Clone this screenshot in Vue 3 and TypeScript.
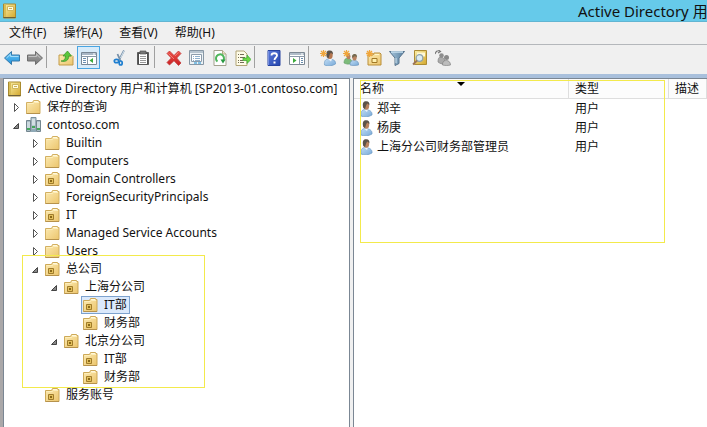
<script setup lang="ts">
import { shallowRef } from 'vue'

interface TreeRow {
  name: string
  level: number
  icon: string
  state?: 'open' | 'closed'
}

interface Tool {
  icon?: string
  label?: string
  kind?: 'separator' | 'space'
  active?: boolean
}

const glyphs: Record<string, string> = {
  console:
    '<path d="M1.500 1h12v14h-12z" fill="url(#gold)" stroke="#a98a2e"/><path d="M2 1.500h2v13H2z" fill="#d9bd55"/><path d="M5.500 3.500h6v4h-6z" fill="#fffbe0" stroke="#d0b65c"/><path d="M7 5.500h3" stroke="#c9b25c"/><path d="M1.500 14.500h12" stroke="#6f6038"/>',
  folder:
    '<path d="M.5 3.500h6l1-2h5l.5 1h1v12H.5z" fill="url(#folder)" stroke="#d3b062"/><path d="M8 2.500h4" stroke="#fff8dc"/><path d="M1.500 4.500h6l1-1h4.500" fill="none" stroke="#fdeebb"/><path d="M.5 14.500H14" stroke="#b6924c"/>',
  unit:
    '<path d="M.5 3.500h6l1-2h5l.5 1h1v12H.5z" fill="url(#folder)" stroke="#cda958"/><path d="M8 2.500h4" stroke="#fff8dc"/><path d="M1.500 4.500h6l1-1h4.500" fill="none" stroke="#fdeebb"/><path d="M3.500 7.500h5v5h-5z" fill="#e4c15e" stroke="#a07c2a"/><path d="M5 9h2v2H5z" fill="#8a6818"/><path d="M.5 14.500H14" stroke="#b6924c"/>',
  domain:
    '<path d="M5 .5h5v12H5z" fill="#b7c7cf" stroke="#7d919b"/><path d="M.5 3.500h4v11h-4zM10.500 3.500h4v11h-4z" fill="#a9bcc5" stroke="#73868f"/><path d="M6 3h3M6 5h3M6 7h3M1 6h3M1 8h3M1 10h3M11 6h3M11 8h3M11 10h3" stroke="#eef6f8"/><path d="M1 11h3v2H1zM11 11h3v2h-3zM6 9h3v2H6z" fill="#45a85b"/><path d="M5 12h5v3H5z" fill="#8fa9b6"/>',
  back:
    '<path d="M.5 8 7.500 1.500V5h8v6h-8v3.500z" fill="url(#blue)" stroke="#3679aa"/><path d="M2.500 8 6.500 4.300V6.500h8" fill="none" stroke="#a4ddfa"/>',
  forward:
    '<path d="M15.500 8 8.500 1.500V5h-8v6h8v3.500z" fill="url(#gray)" stroke="#6e6e6e"/><path d="M1.500 6.500h8V4.300L13.500 8" fill="none" stroke="#c2c2c2"/>',
  up:
    '<path d="M1 5h5l1 1h8v9H1z" fill="url(#folder)" stroke="#c39b48"/><path d="M10 5h4v2" stroke="#fff0b5" fill="none"/><path d="M3 11c3 0 4.500-1.800 4.500-5H5L9.500 1l4 5h-2.700c0 4-3 6.500-7.800 5z" fill="#5cc63b" stroke="#34902a" stroke-width=".7"/>',
  tree:
    '<path d="M.5 2.500h15v12H.5z" fill="#fff" stroke="#798795"/><path d="M1 3h14v2H1z" fill="#a9b7c6"/><path d="M12 4h2" stroke="#fff"/><path d="M.5 6.500h15M6.500 7v7" stroke="#8998a8"/><path d="M2 8.500h3M2 10.500h3M2 12.500h3" stroke="#6b8fb2"/><path d="M12 8v5L8.500 10.500z" fill="#3caa3b"/>',
  cut:
    '<path d="M12 .5 7 10M5.500 4l3 7" stroke="#7790a8" stroke-width="1.800"/><path d="M12 1 8.500 8" stroke="#d7e5ee"/><ellipse cx="4.500" cy="11" rx="2.200" ry="1.700" fill="none" stroke="#1f7fd0" stroke-width="1.700"/><ellipse cx="8.700" cy="13" rx="1.500" ry="2" fill="none" stroke="#1f7fd0" stroke-width="1.700"/>',
  paste:
    '<path d="M2.500 2.500h11v12h-11z" fill="#4d4d4d" stroke="#5c5c5c"/><path d="M4 4h8v10H4z" fill="#fff"/><path d="M5 1h6v3H5z" fill="#777" stroke="#555" stroke-width=".7"/><path d="M5 6.500h6M5 8.500h6M5 10.500h6M5 12.500h6" stroke="#999"/>',
  remove:
    '<path d="M3.500 1 8 5.500 12.500 1 15 3.500 10.700 8 15 13l-2.500 2.500L8 10.700 3.500 15 1 12.500 5.300 8 1 3.500z" fill="url(#red)" stroke="#c23a3a" stroke-width=".8"/><path d="M2.500 3.500 8 9M12.500 2.500 9 6" stroke="#f57b72"/>',
  properties:
    '<path d="M.5.5h14v14H.5z" fill="#edf2f5" stroke="#8797a5"/><path d="M1 1h13v2H1z" fill="#b7c4cf"/><path d="M2.500 4.500h10v7h-10z" fill="#fff" stroke="#8d9cab"/><path d="M4 6.500h1M6 6.500h5M4 8.500h1M6 8.500h5M4 10.500h1M6 10.500h5" stroke="#8fb0cc"/><path d="M5 13h3M9 13h3" stroke="#5eb0de" stroke-width="1.500"/>',
  refresh:
    '<path d="M2 .5h8.500L14 4v11.500H2z" fill="#fff" stroke="#a3a18e"/><path d="M10.500.5V4H14" fill="#eee8c8" stroke="#b1a98a"/><path d="M5.500 11.500A4 4 0 1 1 11 11" fill="none" stroke="#4fb65b" stroke-width="2"/><path d="M8.500 9.500h5L11 13.500z" fill="#299942"/>',
  export:
    '<path d="M1 1h8l3 3v11.500H1z" fill="#fffce8" stroke="#b2a477"/><path d="M3 4.500h1M3 7.500h1M3 10.500h1M3 12.500h1M5 4.500h4M5 7.500h5M5 10.500h3M5 12.500h4" stroke="#746d58"/><path d="M8 8h4V5l4 4.500-4 4v-3H8z" fill="#6dda45" stroke="#39a333" stroke-width=".7"/>',
  help:
    '<path d="M2 .5h12v15H2z" fill="url(#navy)" stroke="#2643a0"/><path d="M2.500 1v14" stroke="#7890df"/><path d="M5.500 5.500c0-3 5.500-3 5.500 0 0 2-2.500 2-2.500 4.500" fill="none" stroke="#fff" stroke-width="1.800"/><path d="M7.500 11.500h2v2h-2z" fill="#fff"/>',
  pane:
    '<path d="M.5 2.500h15v12H.5z" fill="#fff" stroke="#7d8994"/><path d="M1 3h14v2H1z" fill="#b0bdc9"/><path d="M12 4h2" stroke="#fff"/><path d="M.5 6.500h15M10.500 7v7" stroke="#8b9aaa"/><path d="M12 8.500h2M12 10.500h2M12 12.500h2" stroke="#688cac"/><path d="M4 8v5l3.500-2.500z" fill="#3caa3b"/>',
  user:
    '<path d="M1 15c-.5-4 1-6.500 4-6.500 4.500 0 7.500 2 7 5.500-3 2-8 2.500-11 1z" fill="url(#shirt)" stroke="#6f9cc6" stroke-width=".7"/><path d="M4 8.500h4L7 11z" fill="#eef3f7"/><ellipse cx="6.300" cy="4.800" rx="2.900" ry="3.900" fill="#b98260"/><path d="M3.300 7C2 2 3.500.3 6.300.3c2.500 0 3.500 1.700 3 4L7.500 2.500C6 3.500 5.800 6 5 8z" fill="#5d5349"/>',
  newUser:
    '<path d="M4.500 15c-.5-4 1-6 4-6 4.500 0 7.500 1.500 7 5-3 2-8 2.500-11 1z" fill="url(#shirt)" stroke="#6f9cc6" stroke-width=".7"/><path d="M8 9h4l-1 2.500z" fill="#eef3f7"/><ellipse cx="9.800" cy="5" rx="2.900" ry="3.900" fill="#b5764f"/><path d="M6.800 7.200C5.500 2.200 7 .5 9.800.5c2.500 0 3.500 1.700 3 4L11 2.700C9.500 3.700 9.300 6.200 8.500 8.200z" fill="#5d5349"/><path d="M3.500 0v7M0 3.500h7M1 1l5 5M6 1 1 6" stroke="#f0a63c" stroke-width="1.200"/>',
  newGroup:
    '<path d="M1 13c0-4 2-5 4-5s4 2 4 5c-3 1.500-5 1.500-8 0z" fill="#7dbb7a" stroke="#5f9a62" stroke-width=".6"/><ellipse cx="5.500" cy="6.500" rx="2" ry="2.700" fill="#b98260"/><path d="M7 15c0-4 2-4.500 4.500-4.500s4.500 1.500 4 4.500c-3 .7-6 .7-8.500 0z" fill="url(#shirt)" stroke="#6490b8" stroke-width=".6"/><ellipse cx="11.500" cy="7.500" rx="2.200" ry="3" fill="#b98260"/><path d="M9.300 8c-.8-3 .7-4 2.500-4 2 0 2.300 1.500 2 3.500L12 6z" fill="#756a50"/><path d="M3.500 0v7M0 3.500h7M1 1l5 5M6 1 1 6" stroke="#f0a63c" stroke-width="1.200"/>',
  newUnit:
    '<path d="M2 5h5l1-2h6l1 1v11H2z" fill="url(#folder)" stroke="#ba8e38"/><path d="M9 4.500h4" stroke="#fff5c8"/><path d="M6 8.500h5v4H6z" fill="#fff0ae" stroke="#a17826"/><path d="M3.500 0v7M0 3.500h7M1 1l5 5M6 1 1 6" stroke="#f0a63c" stroke-width="1.300"/>',
  filter:
    '<path d="M.5 1.500h15L10 8v5.500l-4 2V8z" fill="url(#steel)" stroke="#58748d"/><path d="M2 2h12" stroke="#c9e0ef" stroke-width="1.500"/><path d="M7 8v5" stroke="#d0e2ed"/>',
  find:
    '<path d="M2.500.5h12v14h-12z" fill="url(#gold)" stroke="#ac8c34"/><path d="M5 2.500h8v4H5z" fill="#fff9d5"/><circle cx="7.500" cy="8" r="3.300" fill="#dcecf2" stroke="#8fa3ae" stroke-width="1.200"/><path d="m5 10.500-4 4" stroke="#9c7357" stroke-width="1.800"/>',
  members:
    '<path d="M3 12c0-4 1-5 3-5s4 2 4 5-5 2-7 0z" fill="#aaa" stroke="#777" stroke-width=".6"/><circle cx="6.500" cy="5.500" r="2.300" fill="#8d8d8d"/><path d="M7.500 15c0-4 2-4.500 4-4.500s4 1.500 4 4.500c-3 .7-5 .7-8 0z" fill="#bdbdbd" stroke="#777" stroke-width=".6"/><circle cx="11.500" cy="7.500" r="2.500" fill="#898989"/><path d="M0 4C1 1 3 0 5 1M3.500 0l2 1.500L3 3" fill="none" stroke="#777" stroke-width="1.200"/>',
}

const menus = ['文件(F)', '操作(A)', '查看(V)', '帮助(H)']

const tools: Tool[] = [
  { icon: 'back', label: '后退' },
  { icon: 'forward', label: '前进' },
  { kind: 'separator' },
  { icon: 'up', label: '上移一级' },
  { icon: 'tree', label: '显示控制台树', active: true },
  { kind: 'space' },
  { icon: 'cut', label: '剪切' },
  { icon: 'paste', label: '粘贴' },
  { kind: 'separator' },
  { icon: 'remove', label: '删除' },
  { icon: 'properties', label: '属性' },
  { icon: 'refresh', label: '刷新' },
  { icon: 'export', label: '导出列表' },
  { kind: 'separator' },
  { icon: 'help', label: '帮助' },
  { icon: 'pane', label: '显示操作窗格' },
  { kind: 'separator' },
  { icon: 'newUser', label: '新建用户' },
  { icon: 'newGroup', label: '新建组' },
  { icon: 'newUnit', label: '新建组织单位' },
  { icon: 'filter', label: '筛选' },
  { icon: 'find', label: '查找' },
  { icon: 'members', label: '添加到组' },
]

const head: TreeRow[] = [
  { name: 'Active Directory 用户和计算机 [SP2013-01.contoso.com]', level: 0, icon: 'console' },
  { name: '保存的查询', level: 1, icon: 'folder', state: 'closed' },
  { name: 'contoso.com', level: 1, icon: 'domain', state: 'open' },
  { name: 'Builtin', level: 2, icon: 'folder', state: 'closed' },
  { name: 'Computers', level: 2, icon: 'folder', state: 'closed' },
  { name: 'Domain Controllers', level: 2, icon: 'unit', state: 'closed' },
  { name: 'ForeignSecurityPrincipals', level: 2, icon: 'folder', state: 'closed' },
  { name: 'IT', level: 2, icon: 'unit', state: 'closed' },
  { name: 'Managed Service Accounts', level: 2, icon: 'folder', state: 'closed' },
  { name: 'Users', level: 2, icon: 'folder', state: 'closed' },
]
const company: TreeRow[] = [
  { name: '总公司', level: 2, icon: 'unit', state: 'open' },
  { name: '上海分公司', level: 3, icon: 'unit', state: 'open' },
  { name: 'IT部', level: 4, icon: 'unit' },
  { name: '财务部', level: 4, icon: 'unit' },
  { name: '北京分公司', level: 3, icon: 'unit', state: 'open' },
  { name: 'IT部', level: 4, icon: 'unit' },
  { name: '财务部', level: 4, icon: 'unit' },
]
const tail: TreeRow[] = [{ name: '服务账号', level: 2, icon: 'unit' }]

const sections = [
  { rows: head, marked: false },
  { rows: company, marked: true },
  { rows: tail, marked: false },
]
const selected = shallowRef<TreeRow>(company[2])

const users = ['郑辛', '杨庚', '上海分公司财务部管理员']
</script>

<template>
  <div class="window">
    <svg class="defs" aria-hidden="true">
      <defs>
        <linearGradient id="gold" x2="1" y2="1"><stop stop-color="#fbf0a8" /><stop offset="1" stop-color="#d3a72c" /></linearGradient>
        <linearGradient id="folder" x2="1" y2="1"><stop stop-color="#fcebb4" /><stop offset="1" stop-color="#ecc56c" /></linearGradient>
        <linearGradient id="blue" x2="0" y2="1"><stop stop-color="#6cc8f6" /><stop offset="1" stop-color="#2192dc" /></linearGradient>
        <linearGradient id="gray" x2="0" y2="1"><stop stop-color="#a8a8a8" /><stop offset="1" stop-color="#777" /></linearGradient>
        <linearGradient id="red" x2="0" y2="1"><stop stop-color="#ee5148" /><stop offset="1" stop-color="#c81f22" /></linearGradient>
        <linearGradient id="navy" x2="1" y2="1"><stop stop-color="#5b7bda" /><stop offset="1" stop-color="#2445ad" /></linearGradient>
        <linearGradient id="shirt" x2="1" y2="1"><stop stop-color="#c0dcf4" /><stop offset="1" stop-color="#78a9d8" /></linearGradient>
        <linearGradient id="steel" x2="1" y2="0"><stop stop-color="#aac9de" /><stop offset="1" stop-color="#567c9c" /></linearGradient>
      </defs>
    </svg>

    <header class="titlebar">
      <svg class="icon" viewBox="0 0 16 16" v-html="glyphs.console"></svg>
      <h1>Active Directory 用户和计算机</h1>
    </header>

    <nav class="menubar">
      <button v-for="menu in menus" :key="menu" type="button">{{ menu }}</button>
    </nav>

    <div class="toolbar" role="toolbar">
      <template v-for="(tool, i) in tools" :key="i">
        <span v-if="tool.kind" :class="tool.kind"></span>
        <button v-else type="button" class="tool" :class="{ active: tool.active }" :aria-label="tool.label">
          <svg class="icon" viewBox="0 0 16 16" v-html="glyphs[tool.icon!]"></svg>
        </button>
      </template>
    </div>

    <main class="body">
      <div class="tree" role="tree">
        <div v-for="(section, s) in sections" :key="s" class="section" :class="{ marked: section.marked }" role="group">
          <div v-for="(row, r) in section.rows" :key="r" class="row" role="treeitem" :aria-selected="row === selected">
            <span v-for="n in row.level" :key="n" class="indent">
              <svg v-if="n === row.level && row.state" class="arrow" viewBox="0 0 19 18" aria-hidden="true">
                <path v-if="row.state === 'closed'" d="M9.500 5.500v8l4-4z" fill="#fff" stroke="#555" />
                <path v-else d="M13.500 7.500v5h-5z" fill="#888" stroke="#444" />
              </svg>
            </span>
            <button type="button" class="node" :class="{ selected: row === selected }" @click="selected = row">
              <svg class="icon" viewBox="0 0 16 16" v-html="glyphs[row.icon]"></svg>
              <span>{{ row.name }}</span>
            </button>
          </div>
        </div>
      </div>

      <section class="list">
        <table>
          <colgroup>
            <col class="name-col" />
            <col class="type-col" />
            <col />
          </colgroup>
          <thead>
            <tr>
              <th scope="col" class="sorted">名称</th>
              <th scope="col">类型</th>
              <th scope="col">描述</th>
            </tr>
          </thead>
          <tbody>
            <tr v-for="user in users" :key="user">
              <td>
                <div class="person">
                  <svg class="icon" viewBox="0 0 16 16" v-html="glyphs.user"></svg>
                  <span>{{ user }}</span>
                </div>
              </td>
              <td>用户</td>
              <td></td>
            </tr>
          </tbody>
        </table>
        <div class="frame"></div>
      </section>
    </main>
  </div>
</template>

<style>
body {
  margin: 0;
  overflow: hidden;
}
</style>

<style scoped>
.window {
  display: flex;
  flex-direction: column;
  min-height: 100vh;
  overflow: hidden;
  background: #f0f0f0;
  color: #111;
  font: 12px/18px 'Noto Sans', 'Noto Sans CJK SC', sans-serif;
}
.defs {
  position: absolute;
  width: 0;
  height: 0;
}
button {
  margin: 0;
  padding: 0;
  border: 0;
  background: none;
  color: inherit;
  font: inherit;
}
.icon {
  display: block;
  flex: none;
  width: 16px;
  height: 16px;
}
.titlebar {
  display: flex;
  justify-content: space-between;
  align-items: center;
  box-sizing: border-box;
  height: 22px;
  padding-left: 2px;
  border-bottom: 1px solid #62b5d2;
  background: #66caea;
}
h1 {
  flex: none;
  width: 129px;
  margin: 0;
  font-size: 15px;
  font-weight: 400;
  line-height: 20px;
  white-space: nowrap;
}
.menubar {
  display: flex;
  gap: 17px;
  box-sizing: border-box;
  height: 23px;
  padding: 2px 9px;
  border-bottom: 1px solid #b4b7bb;
}
.toolbar {
  display: flex;
  box-sizing: border-box;
  height: 29px;
  padding: 1px 0;
}
.tool {
  display: flex;
  align-items: center;
  justify-content: center;
  box-sizing: border-box;
  width: 23px;
  height: 23px;
}
.tool.active {
  border: 1px solid #4aa5e2;
  background: #d8ebf9;
}
.separator,
.space {
  box-sizing: border-box;
  width: 8px;
  height: 22px;
}
.separator {
  border-left: 1px solid #a0a0a0;
}
.body {
  display: flex;
  flex: 1;
  gap: 3px;
  padding-left: 3px;
  border-top: 4px solid #a9c0dc;
}
.tree {
  flex: none;
  box-sizing: border-box;
  width: 347px;
  padding: 1px 0 0 1px;
  border: solid #7b8794;
  border-width: 1px 1px 0 1px;
  background: #fff;
  box-shadow: -3px 0 #aaa8a9;
}
.section {
  position: relative;
}
.marked::after {
  content: '';
  position: absolute;
  left: 17px;
  top: -5px;
  width: 181px;
  height: 131px;
  border: 1px solid #f3ea4c;
  pointer-events: none;
}
.row {
  display: flex;
  height: 18px;
}
.indent {
  width: 19px;
}
.arrow {
  display: block;
  width: 19px;
  height: 18px;
}
.node {
  display: flex;
  align-items: center;
  gap: 5px;
  padding: 0 2px 0 1px;
  border: 1px solid transparent;
  line-height: 16px;
  white-space: nowrap;
}
.node.selected {
  border-color: #7da2ce;
  background: #dbe9fb;
}
.list {
  position: relative;
  flex: 1;
  min-width: 0;
  border: solid #7b8794;
  border-width: 1px 0 0 1px;
  background: #fff;
}
table {
  width: 100%;
  table-layout: fixed;
  border-collapse: separate;
  border-spacing: 0;
}
.name-col {
  width: 215px;
}
.type-col {
  width: 100px;
}
th,
td {
  height: 19px;
  padding: 0 0 0 6px;
  font-weight: 400;
  line-height: 19px;
  text-align: left;
  white-space: nowrap;
}
th {
  box-sizing: border-box;
  border-right: 1px solid #dedede;
  border-bottom: 1px solid #dedede;
  background: #fcfcfc;
}
.sorted {
  position: relative;
}
.sorted::after {
  content: '';
  position: absolute;
  left: 50%;
  top: 3px;
  margin-left: -4px;
  border: solid transparent;
  border-width: 4px 4px 0;
  border-top-color: #000;
}
.person {
  display: flex;
  align-items: center;
  gap: 1px;
}
.frame {
  position: absolute;
  left: 6px;
  top: 1px;
  width: 303px;
  height: 161px;
  border: 1px solid #f3ea4c;
  pointer-events: none;
}
</style>
